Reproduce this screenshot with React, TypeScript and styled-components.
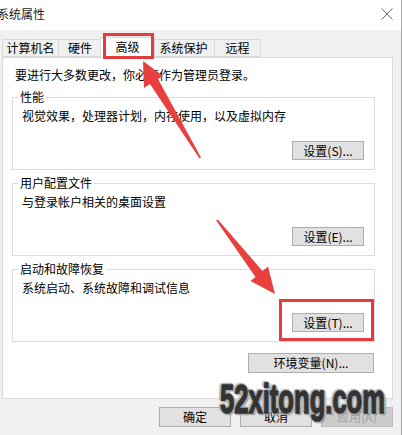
import React from "react";
import styled, { createGlobalStyle } from "styled-components";

const Global = createGlobalStyle`
  html, body { margin: 0; padding: 0; background: #fff; }
  body { font-family: "Noto Sans CJK SC", "Liberation Sans", sans-serif; }
`;

const Window = styled.div`
  position: relative;
  width: 402px;
  height: 435px;
  box-sizing: border-box;
  border-right: 1px solid #a9a9a9;
  background: #f0f0f0;
  display: flex;
  flex-direction: column;
  overflow: hidden;
  font-family: "Noto Sans CJK SC", "Liberation Sans", sans-serif;
  font-size: 12px;
  color: #000;
`;

const TitleBar = styled.div`
  height: 30px;
  flex: none;
  background: #fff;
  display: flex;
  align-items: center;
  justify-content: space-between;
  padding-right: 8px;
`;

const Title = styled.span`
  margin-left: -3px;
  margin-top: -2px;
  line-height: 14px;
  color: #1a1a1a;
`;

const CloseIcon = styled.svg`
  margin-top: -3px;
  display: block;
`;

const Body = styled.div`
  flex: 1;
  display: flex;
  flex-direction: column;
  padding: 7px 8px 0 2px;
`;

const TabRow = styled.div`
  display: flex;
  align-items: flex-end;
  height: 20px;
  position: relative;
  z-index: 1;
`;

const Tab = styled.div<{ $w: number; $active?: boolean }>`
  width: ${(p) => p.$w}px;
  height: ${(p) => (p.$active ? 21 : 18)}px;
  box-sizing: border-box;
  border: 1px solid #d9d9d9;
  border-bottom: ${(p) => (p.$active ? "none" : "1px solid #d9d9d9")};
  background: ${(p) => (p.$active ? "#fff" : "#f0f0f0")};
  margin: 0 ${(p) => (p.$active ? "-2px" : "0")} ${(p) => (p.$active ? "-1px" : "0")}
    ${(p) => (p.$active ? "-2px" : "-1px")};
  position: relative;
  z-index: ${(p) => (p.$active ? 2 : 1)};
  display: flex;
  align-items: center;
  justify-content: center;
  line-height: 14px;
  padding-bottom: ${(p) => (p.$active ? 3 : 0)}px;
  &:first-child {
    margin-left: 0;
  }
`;

const Panel = styled.div`
  width: 391px;
  height: 342px;
  box-sizing: border-box;
  border: 1px solid #d9d9d9;
  background: #fff;
  padding: 10px 17px 0 9px;
  display: flex;
  flex-direction: column;
`;

const Intro = styled.div`
  margin-left: 3px;
  line-height: 14px;
`;

const GroupList = styled.div`
  display: flex;
  flex-direction: column;
  gap: 13px;
  margin-top: 15px;
`;

const Group = styled.div`
  position: relative;
  height: 73px;
  box-sizing: border-box;
  border: 1px solid #dcdcdc;
  padding: 11px 10px 9px 9px;
  display: flex;
  flex-direction: column;
  justify-content: space-between;
`;

const Legend = styled.span`
  position: absolute;
  top: -8px;
  left: 5px;
  padding: 0 2px;
  background: #fff;
  line-height: 14px;
`;

const Desc = styled.div`
  line-height: 14px;
`;

const ButtonRow = styled.div<{ $mt?: number; $mr?: number }>`
  display: flex;
  justify-content: flex-end;
  margin-top: ${(p) => p.$mt ?? 0}px;
  margin-right: ${(p) => p.$mr ?? 0}px;
`;

const Btn = styled.button<{ $w: number; $h: number }>`
  width: ${(p) => p.$w}px;
  height: ${(p) => p.$h}px;
  box-sizing: border-box;
  border: 1px solid #adadad;
  background: #e1e1e1;
  font-family: "Noto Sans CJK SC", "Liberation Sans", sans-serif;
  font-size: 12px;
  line-height: 14px;
  color: #000;
  padding: 0;
  margin: 0;
  &:disabled {
    color: #a0a0a0;
    border-color: #bfbfbf;
    background: #cccccc;
  }
`;

const Footer = styled.div`
  display: flex;
  justify-content: flex-end;
  gap: 9px;
  padding-top: 8px;
`;

const Overlay = styled.svg`
  position: absolute;
  left: 0;
  top: 0;
  pointer-events: none;
  z-index: 5;
`;

const Watermark = styled.div`
  position: absolute;
  left: 220px;
  top: 379px;
  z-index: 6;
  font-family: "Liberation Sans", sans-serif;
  font-weight: bold;
  font-size: 40px;
  line-height: 40px;
  color: #333;
  -webkit-text-stroke: 1.5px #333;
  white-space: nowrap;
  transform: scaleX(0.64);
  transform-origin: left top;
  text-shadow: 0 0 1px #fff, 3px 0 1px #b0b0b0, -3px 0 1px #b0b0b0, 0 2px 1px #b0b0b0,
    0 -2px 1px #b0b0b0, 3px 2px 2px #8a8a8a, -3px -2px 2px #c8c8c8;
  pointer-events: none;
`;

const groups = [
  { title: "性能", desc: "视觉效果，处理器计划，内存使用，以及虚拟内存", btn: "设置(S)..." },
  { title: "用户配置文件", desc: "与登录帐户相关的桌面设置", btn: "设置(E)..." },
  { title: "启动和故障恢复", desc: "系统启动、系统故障和调试信息", btn: "设置(T)..." },
];

const tabs = [
  { label: "计算机名", w: 57 },
  { label: "硬件", w: 44 },
  { label: "高级", w: 55, active: true },
  { label: "系统保护", w: 63 },
  { label: "远程", w: 47 },
];

export default function App() {
  return (
    <>
      <Global />
      <Window>
        <TitleBar>
          <Title>系统属性</Title>
          <CloseIcon width="12" height="12" viewBox="0 0 12 12">
            <path d="M0.5 0.5 L11.5 11.5 M11.5 0.5 L0.5 11.5" stroke="#666" strokeWidth="1" fill="none" />
          </CloseIcon>
        </TitleBar>
        <Body>
          <TabRow>
            {tabs.map((t) => (
              <Tab key={t.label} $w={t.w} $active={t.active}>
                {t.label}
              </Tab>
            ))}
          </TabRow>
          <Panel>
            <Intro>要进行大多数更改，你必须作为管理员登录。</Intro>
            <GroupList>
              {groups.map((g) => (
                <Group key={g.title}>
                  <Legend>{g.title}</Legend>
                  <Desc>{g.desc}</Desc>
                  <ButtonRow>
                    <Btn $w={72} $h={19}>{g.btn}</Btn>
                  </ButtonRow>
                </Group>
              ))}
            </GroupList>
            <ButtonRow $mt={11} $mr={1}>
              <Btn $w={126} $h={20}>环境变量(N)...</Btn>
            </ButtonRow>
          </Panel>
          <Footer>
            <Btn $w={72} $h={20}>确定</Btn>
            <Btn $w={72} $h={20}>取消</Btn>
            <Btn $w={72} $h={20} disabled>应用(A)</Btn>
          </Footer>
        </Body>
        <Overlay width="403" height="435" viewBox="0 0 403 435">
          <rect x="104.5" y="34.5" width="48" height="23" fill="none" stroke="#e23c3c" strokeWidth="3" />
          <rect x="280.5" y="300.5" width="92" height="39" fill="none" stroke="#e23c3c" strokeWidth="3" />
          <polygon
            points="143,61 163,76 158,79 201,157.5 199.5,158.5 150,84 144,88"
            fill="#e8403f"
          />
          <polygon
            points="275,294 250.5,281 255.5,277 216.2,220.6 217.8,219.4 262.5,271 268,266.5"
            fill="#e8403f"
          />
        </Overlay>
        <Watermark>52xitong.com</Watermark>
      </Window>
    </>
  );
}
